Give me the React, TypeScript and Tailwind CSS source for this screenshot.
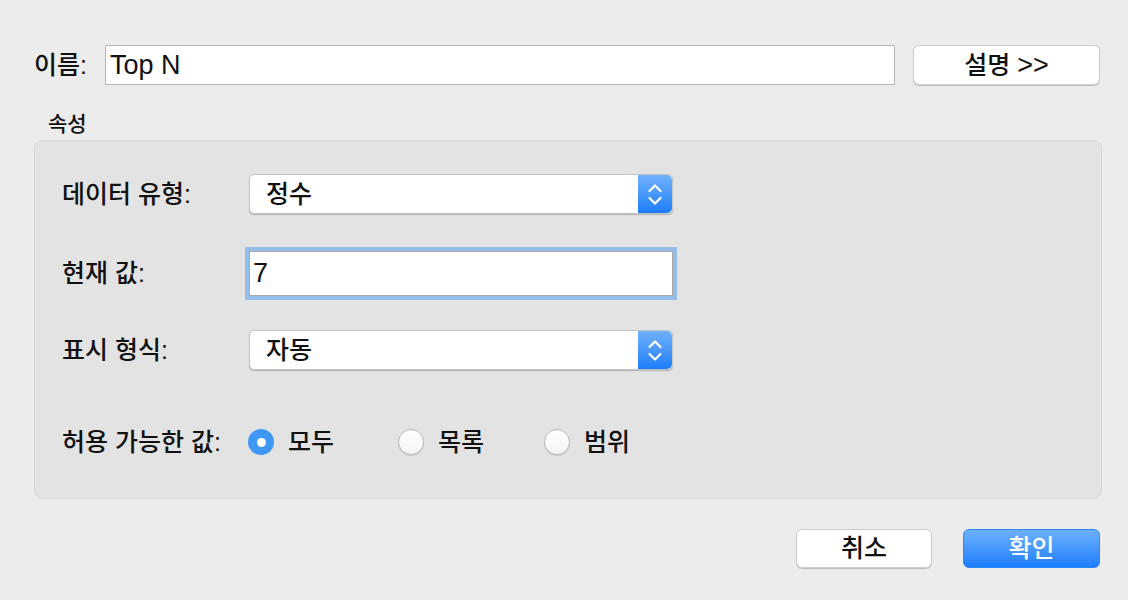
import { useState } from "react";

function Stepper() {
  return (
    <div className="flex h-full w-[34px] items-center justify-center rounded-r-[5px] bg-gradient-to-b from-[#6eb1fc] to-[#1a7dfb]">
      <svg width="34" height="39" viewBox="0 0 34 39" fill="none" stroke="white" strokeWidth={2.2} strokeLinecap="round" strokeLinejoin="round">
        <path d="M11.5 16 L17 10.5 L22.5 16" />
        <path d="M11.5 23 L17 28.5 L22.5 23" />
      </svg>
    </div>
  );
}

function Select({ value }: { value: string }) {
  return (
    <div className="flex h-[40px] w-[424px] items-stretch rounded-[5px] border border-[#c4c4c4] bg-white shadow-[0_1px_1px_rgba(0,0,0,0.22)]">
      <div className="flex flex-1 items-center pl-[16px] text-[25px] font-medium leading-none text-[#111]">{value}</div>
      <Stepper />
    </div>
  );
}

function Radio({ label, checked, onClick }: { label: string; checked: boolean; onClick: () => void }) {
  return (
    <button type="button" onClick={onClick} className="flex items-center gap-[14px]">
      {checked ? (
        <span className="flex size-[26px] items-center justify-center rounded-full bg-[#3f98f6]">
          <span className="size-[9px] rounded-full bg-white" />
        </span>
      ) : (
        <span className="size-[26px] rounded-full border border-[#b9b9b9] bg-gradient-to-b from-white to-[#f4f4f4] shadow-[0_1px_1px_rgba(0,0,0,0.12)]" />
      )}
      <span className="text-[25px] font-medium leading-none text-[#111]">{label}</span>
    </button>
  );
}

export default function App() {
  const [allowed, setAllowed] = useState("all");

  return (
    <div className="h-[600px] w-[1128px] bg-[#ececec] pl-[34px] pr-[26px] pt-[45px] font-['Liberation_Sans','Noto_Sans_CJK_KR',sans-serif] text-[#111]">
      {/* Name row */}
      <div className="mr-[2px] flex h-[40px] items-center">
        <span className="w-[71px] text-[25px] font-medium leading-none">이름:</span>
        <div className="flex h-full flex-1 items-center border border-[#b4b4b4] bg-white pl-[4px] text-[27px] leading-none">
          Top N
        </div>
        <button
          type="button"
          className="ml-[18px] flex h-full w-[187px] items-center justify-center gap-[7px] rounded-[6px] border border-[#cdcdcd] bg-white shadow-[0_1px_1px_rgba(0,0,0,0.2)]"
        >
          <span className="text-[25px] font-medium leading-none">설명</span>
          <span className="text-[27px] leading-none">&gt;&gt;</span>
        </button>
      </div>

      <div className="mt-[28px] pl-[14px] text-[21px] font-medium leading-none">속성</div>

      {/* Properties panel */}
      <div className="mt-[6px] h-[359px] w-[1068px] rounded-[8px] border border-[#d9d9d9] bg-[#e3e3e3] pl-[27px] pt-[33px]">
        <div className="flex h-[40px] items-center">
          <span className="w-[187px] text-[25px] font-medium leading-none">데이터 유형:</span>
          <Select value="정수" />
        </div>

        <div className="mt-[33px] flex h-[52px] items-center">
          <span className="w-[187px] text-[25px] font-medium leading-none">현재 값:</span>
          <div className="flex h-[45px] w-[424px] items-center border border-[#a9a9a9] bg-white pl-[3px] text-[27px] leading-none ring-4 ring-[#95bde9]">
            7
          </div>
        </div>

        <div className="mt-[31px] flex h-[40px] items-center">
          <span className="w-[187px] text-[25px] font-medium leading-none">표시 형식:</span>
          <Select value="자동" />
        </div>

        <div className="mt-[57px] flex h-[30px] items-center">
          <span className="w-[186px] text-[25px] font-medium leading-none">허용 가능한 값:</span>
          <div className="flex items-center">
            <div className="w-[150px]">
              <Radio label="모두" checked={allowed === "all"} onClick={() => setAllowed("all")} />
            </div>
            <div className="w-[146px]">
              <Radio label="목록" checked={allowed === "list"} onClick={() => setAllowed("list")} />
            </div>
            <Radio label="범위" checked={allowed === "range"} onClick={() => setAllowed("range")} />
          </div>
        </div>
      </div>

      {/* Dialog buttons */}
      <div className="mr-[2px] mt-[30px] flex justify-end gap-[31px]">
        <button
          type="button"
          className="flex h-[39px] w-[136px] items-center justify-center rounded-[6px] border border-[#cdcdcd] bg-white text-[25px] font-medium leading-none shadow-[0_1px_1px_rgba(0,0,0,0.2)]"
        >
          취소
        </button>
        <button
          type="button"
          className="flex h-[39px] w-[137px] items-center justify-center rounded-[6px] border border-[#2c86f5] bg-gradient-to-b from-[#6cb0fc] to-[#1a7efb] text-[25px] font-medium leading-none text-white"
        >
          확인
        </button>
      </div>
    </div>
  );
}
